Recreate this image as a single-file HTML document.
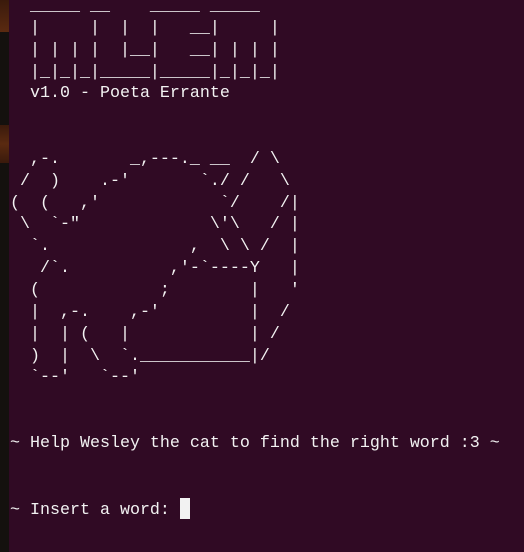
<!DOCTYPE html>
<html><head><meta charset="utf-8"><style>
html,body{margin:0;padding:0;width:524px;height:552px;overflow:hidden;background:#300a24;}
.strip{position:absolute;left:0;top:0;width:9px;height:552px;background:#14110e;}
.o1{position:absolute;left:0;top:0;width:9px;height:32px;background:linear-gradient(#3a1a0c,#5a2a10);}
.o2{position:absolute;left:0;top:125px;width:9px;height:38px;background:linear-gradient(#3a1a0c,#5a2a10,#3a1a0c);}
pre{position:absolute;left:10px;top:-4px;margin:0;font-family:"Liberation Mono",monospace;font-size:16.67px;line-height:21.85px;color:#f2f2f2;}
.cur{display:inline-block;width:10px;height:21px;background:#f2f2f2;vertical-align:-5px;}
</style></head><body>
<div class="strip"></div><div class="o1"></div><div class="o2"></div>
<pre>  _____ __    _____ _____
  |     |  |  |   __|     |
  | | | |  |__|   __| | | |
  |_|_|_|_____|_____|_|_|_|
  v1.0 - Poeta Errante


  ,-.       _,---._ __  / \
 /  )    .-'       `./ /   \
(  (   ,'            `/    /|
 \  `-"             \'\   / |
  `.              ,  \ \ /  |
   /`.          ,'-`----Y   |
  (            ;        |   '
  |  ,-.    ,-'         |  /
  |  | (   |            | /
  )  |  \  `.___________|/
  `--'   `--'


~ Help Wesley the cat to find the right word :3 ~


~ Insert a word: <span class="cur"></span></pre>
</body></html>
